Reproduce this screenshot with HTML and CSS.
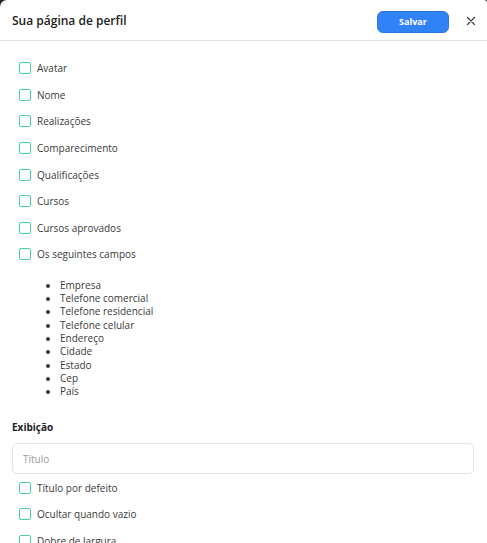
FILE: index.html
```html
<!DOCTYPE html>
<html lang="pt">
<head>
<meta charset="utf-8">
<title>Sua página de perfil</title>
<link rel="stylesheet" href="styles.css">
</head>
<body>
<div class="modal">
  <header class="header">
    <h1 class="title">Sua página de perfil</h1>
    <button class="save">Salvar</button>
    <button class="close" aria-label="Fechar">
      <svg width="10" height="10" viewBox="0 0 10 10"><path d="M1.5 1.5L8.5 8.5M8.5 1.5L1.5 8.5" stroke="#444" stroke-width="1.3" stroke-linecap="round"/></svg>
    </button>
  </header>
  <main class="content">
    <div class="checks">
      <label class="row"><span class="box"></span>Avatar</label>
      <label class="row"><span class="box"></span>Nome</label>
      <label class="row"><span class="box"></span>Realizações</label>
      <label class="row"><span class="box"></span>Comparecimento</label>
      <label class="row"><span class="box"></span>Qualificações</label>
      <label class="row"><span class="box"></span>Cursos</label>
      <label class="row"><span class="box"></span>Cursos aprovados</label>
      <label class="row"><span class="box"></span>Os seguintes campos</label>
    </div>
    <ul class="fields">
      <li>Empresa</li>
      <li>Telefone comercial</li>
      <li>Telefone residencial</li>
      <li>Telefone celular</li>
      <li>Endereço</li>
      <li>Cidade</li>
      <li>Estado</li>
      <li>Cep</li>
      <li>País</li>
    </ul>
    <h2 class="section">Exibição</h2>
    <input class="input" type="text" placeholder="Título">
    <div class="checks">
      <label class="row"><span class="box"></span>Título por defeito</label>
      <label class="row"><span class="box"></span>Ocultar quando vazio</label>
      <label class="row"><span class="box"></span>Dobre de largura</label>
    </div>
  </main>
</div>
</body>
</html>
```
FILE: styles.css
```css
html, body {
  margin: 0;
  padding: 0;
  height: 100%;
  overflow: hidden;
  background: #2a2a2a;
}
body {
  font-family: "Open Sans", "Noto Sans", sans-serif;
  color: #333;
}
.modal {
  background: #fff;
  height: 100%;
  border-radius: 7px 3px 0 0;
}
.header {
  display: flex;
  align-items: center;
  height: 40px;
  padding: 0 11px 0 12px;
  border-bottom: 1px solid #e3e3e3;
}
.title {
  flex: 1;
  margin: 0;
  font-size: 12px;
  font-weight: 600;
  color: #222;
}
.save {
  width: 72px;
  height: 22px;
  border: 1px solid #2a77e8;
  border-radius: 6px;
  background: #3182f6;
  color: #fff;
  font-family: "Open Sans", sans-serif;
  font-size: 9px;
  font-weight: 700;
  padding: 0;
  margin-right: 17px;
  margin-top: 3px;
}
.close {
  border: 0;
  background: none;
  padding: 0;
  width: 10px;
  height: 10px;
  display: flex;
  margin-top: 2px;
}
.content {
  padding: 14px 13px 0 12px;
}
.checks {
  display: flex;
  flex-direction: column;
}
.row {
  display: flex;
  align-items: center;
  height: 26.6px;
  font-size: 10px;
  padding-left: 7px;
  color: #3a3a3a;
}
.box {
  width: 10px;
  height: 10px;
  border: 1.5px solid #48d19f;
  border-radius: 2px;
  margin-right: 6px;
  flex: none;
}
.fields {
  margin: 11px 0 0;
  padding-left: 48px;
  font-size: 10px;
  line-height: 13.3px;
  color: #3a3a3a;
}
.section {
  margin: 22px 0 9px;
  font-size: 10px;
  font-weight: 700;
  line-height: 14px;
  color: #222;
}
.input {
  display: block;
  box-sizing: border-box;
  width: 100%;
  height: 31px;
  border: 1px solid #e4e4e4;
  border-radius: 5px;
  padding: 0 10px;
  font-family: "Open Sans", sans-serif;
  font-size: 10px;
  outline: none;
}
.input::placeholder {
  color: #999;
}
```
